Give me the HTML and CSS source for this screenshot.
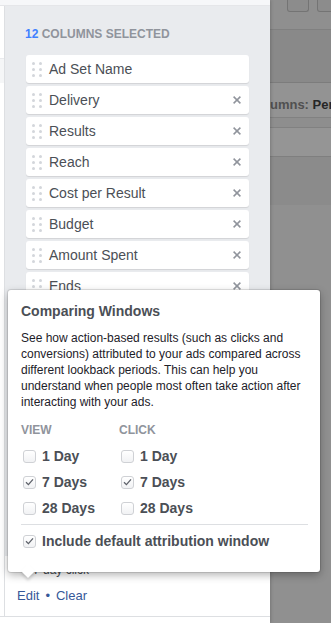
FILE: index.html
```html
<!DOCTYPE html>
<html lang="en">
  <head>
    <meta charset="UTF-8" />
    <meta name="viewport" content="width=device-width, initial-scale=1.0" />
    <title>Columns</title>
    <link rel="stylesheet" href="styles.css">
  </head>
  <body>
    <div class="page">
      <aside class="panel">
        <div class="panel-top"></div>
        <div class="panel-main">
          <div class="rail"><div class="rail-row"></div></div>
          <div class="panel-content">
            <div class="column-area">
              <h2 class="count"><span class="count-num">12</span> Columns Selected</h2>
              <ul class="column-list">
                <li class="column-item"><span class="handle"><i></i><i></i><i></i><i></i><i></i><i></i></span><span class="column-name">Ad Set Name</span></li>
                <li class="column-item"><span class="handle"><i></i><i></i><i></i><i></i><i></i><i></i></span><span class="column-name">Delivery</span><svg class="remove" width="8" height="8" viewBox="0 0 8 8"><path d="M0.6 0.6L7.4 7.4M7.4 0.6L0.6 7.4" /></svg></li>
                <li class="column-item"><span class="handle"><i></i><i></i><i></i><i></i><i></i><i></i></span><span class="column-name">Results</span><svg class="remove" width="8" height="8" viewBox="0 0 8 8"><path d="M0.6 0.6L7.4 7.4M7.4 0.6L0.6 7.4" /></svg></li>
                <li class="column-item"><span class="handle"><i></i><i></i><i></i><i></i><i></i><i></i></span><span class="column-name">Reach</span><svg class="remove" width="8" height="8" viewBox="0 0 8 8"><path d="M0.6 0.6L7.4 7.4M7.4 0.6L0.6 7.4" /></svg></li>
                <li class="column-item"><span class="handle"><i></i><i></i><i></i><i></i><i></i><i></i></span><span class="column-name">Cost per Result</span><svg class="remove" width="8" height="8" viewBox="0 0 8 8"><path d="M0.6 0.6L7.4 7.4M7.4 0.6L0.6 7.4" /></svg></li>
                <li class="column-item"><span class="handle"><i></i><i></i><i></i><i></i><i></i><i></i></span><span class="column-name">Budget</span><svg class="remove" width="8" height="8" viewBox="0 0 8 8"><path d="M0.6 0.6L7.4 7.4M7.4 0.6L0.6 7.4" /></svg></li>
                <li class="column-item"><span class="handle"><i></i><i></i><i></i><i></i><i></i><i></i></span><span class="column-name">Amount Spent</span><svg class="remove" width="8" height="8" viewBox="0 0 8 8"><path d="M0.6 0.6L7.4 7.4M7.4 0.6L0.6 7.4" /></svg></li>
                <li class="column-item"><span class="handle"><i></i><i></i><i></i><i></i><i></i><i></i></span><span class="column-name">Ends</span><svg class="remove" width="8" height="8" viewBox="0 0 8 8"><path d="M0.6 0.6L7.4 7.4M7.4 0.6L0.6 7.4" /></svg></li>
                <li class="column-item"><span class="handle"><i></i><i></i><i></i><i></i><i></i><i></i></span><span class="column-name">Schedule</span><svg class="remove" width="8" height="8" viewBox="0 0 8 8"><path d="M0.6 0.6L7.4 7.4M7.4 0.6L0.6 7.4" /></svg></li>
                <li class="column-item"><span class="handle"><i></i><i></i><i></i><i></i><i></i><i></i></span><span class="column-name">Relevance Score</span><svg class="remove" width="8" height="8" viewBox="0 0 8 8"><path d="M0.6 0.6L7.4 7.4M7.4 0.6L0.6 7.4" /></svg></li>
                <li class="column-item"><span class="handle"><i></i><i></i><i></i><i></i><i></i><i></i></span><span class="column-name">Impressions</span><svg class="remove" width="8" height="8" viewBox="0 0 8 8"><path d="M0.6 0.6L7.4 7.4M7.4 0.6L0.6 7.4" /></svg></li>
                <li class="column-item"><span class="handle"><i></i><i></i><i></i><i></i><i></i><i></i></span><span class="column-name">Frequency</span><svg class="remove" width="8" height="8" viewBox="0 0 8 8"><path d="M0.6 0.6L7.4 7.4M7.4 0.6L0.6 7.4" /></svg></li>
              </ul>
            </div>
            <div class="summary">
              <p class="summary-text">7 day click</p>
              <p class="summary-links"><a href="#">Edit</a><span class="dot">&bull;</span><a href="#">Clear</a></p>
            </div>
          </div>
        </div>
      </aside>

      <div class="backdrop">
        <div class="bd-toolbar">
          <span class="bd-btn"></span>
          <span class="bd-btn bd-btn-wide"></span>
        </div>
        <div class="bd-band"></div>
        <div class="bd-bar"></div>
        <div class="bd-filter">Columns: <strong>Performance</strong></div>
        <div class="bd-gap"></div>
        <div class="bd-head"></div>
        <div class="bd-row"></div>
        <div class="bd-rest"></div>
      </div>

      <div class="popover">
        <h3 class="popover-title">Comparing Windows</h3>
        <p class="popover-text">See how action-based results (such as clicks and conversions) attributed to your ads compared across different lookback periods. This can help you understand when people most often take action after interacting with your ads.</p>
        <div class="window-grid">
          <div class="window-col">
            <div class="window-label">View</div>
            <label class="check"><span class="box"></span>1 Day</label>
            <label class="check"><span class="box"><svg width="9" height="8" viewBox="0 0 9 8"><path d="M1 4.3L3.4 6.6L8 1.4" /></svg></span>7 Days</label>
            <label class="check"><span class="box"></span>28 Days</label>
          </div>
          <div class="window-col">
            <div class="window-label">Click</div>
            <label class="check"><span class="box"></span>1 Day</label>
            <label class="check"><span class="box"><svg width="9" height="8" viewBox="0 0 9 8"><path d="M1 4.3L3.4 6.6L8 1.4" /></svg></span>7 Days</label>
            <label class="check"><span class="box"></span>28 Days</label>
          </div>
        </div>
        <label class="check check-default"><span class="box"><svg width="9" height="8" viewBox="0 0 9 8"><path d="M1 4.3L3.4 6.6L8 1.4" /></svg></span>Include default attribution window</label>
      </div>
    </div>
  </body>
</html>
```

FILE: styles.css
```css
* {
  box-sizing: border-box;
}

body {
  margin: 0;
  font-family: 'Liberation Sans', Arial, Helvetica, sans-serif;
  background: #fff;
}

.page {
  position: relative;
  display: flex;
  height: 623px;
  overflow: hidden;
}

/* left panel */

.panel {
  position: relative;
  z-index: 1;
  width: 270px;
  flex: none;
  display: flex;
  flex-direction: column;
  background: #fff;
  box-shadow: 1px 0 3px rgba(0, 0, 0, 0.18);
}

.panel-top {
  height: 6px;
  background: #f6f7f9;
  border-bottom: 1px solid #e5e6e9;
}

.panel-main {
  height: 611px;
  display: flex;
  border-bottom: 1px solid #dddfe2;
}

.rail {
  width: 5px;
  flex: none;
  background: #fff;
  border-right: 1px solid #dddfe2;
}

.rail-row {
  margin-top: 52px;
  height: 25px;
  background: #f5f6f7;
  border-top: 1px solid #e9eaed;
}

.panel-content {
  flex: 1;
  min-width: 0;
  display: flex;
  flex-direction: column;
}

.column-area {
  flex: 1;
  background: #e9ebee;
  padding: 20px 21px 0 20px;
  overflow: hidden;
}

.count {
  margin: 0 0 13px;
  font-size: 12px;
  line-height: 16px;
  font-weight: bold;
  text-transform: uppercase;
  color: #90949c;
}

.count-num {
  color: #4080ff;
}

.column-list {
  list-style: none;
  margin: 0 0 0 1px;
  padding: 0;
  display: flex;
  flex-direction: column;
  gap: 3px;
}

.column-item {
  height: 28px;
  flex: none;
  display: flex;
  align-items: center;
  padding: 0 8px 0 6px;
  background: #fff;
  border-radius: 3px;
  box-shadow: 0 1px 1px rgba(0, 0, 0, 0.1);
  font-size: 14px;
  color: #4b4f56;
}

.handle {
  display: grid;
  grid-template-columns: repeat(2, 3px);
  grid-auto-rows: 3px;
  gap: 3px 4px;
  margin-right: 7px;
}

.handle i {
  border-radius: 50%;
  background: #d3d6db;
}

.column-name {
  flex: 1;
}

.remove path {
  stroke: #90949c;
  stroke-width: 1.5;
  fill: none;
}

.summary {
  height: 60px;
  padding: 6px 12px 12px;
  background: #fff;
}

.summary-text {
  margin: 0 0 10px;
  padding-left: 16px;
  font-size: 12px;
  line-height: 16px;
  color: #4b4f56;
}

.summary-links {
  margin: 0;
  font-size: 13px;
  line-height: 16px;
}

.summary-links a {
  color: #365899;
  text-decoration: none;
}

.dot {
  margin: 0 6px;
  color: #365899;
}

/* dimmed report behind */

.backdrop {
  flex: 1;
  display: flex;
  flex-direction: column;
  background: #8f8f8f;
}

.bd-toolbar {
  height: 12px;
  display: flex;
  gap: 8px;
  padding-left: 17px;
  background: #8f8f8f;
}

.bd-btn {
  width: 22px;
  height: 12px;
  border: 1px solid #747474;
  border-top: none;
  border-radius: 0 0 3px 3px;
  background: #8c8c8c;
}

.bd-btn-wide {
  width: 40px;
}

.bd-band {
  height: 18px;
  background: #8f8f8f;
  border-bottom: 1px solid #808080;
}

.bd-bar {
  height: 53px;
  background: #898989;
  border-bottom: 1px solid #7c7c7c;
}

.bd-filter {
  height: 35px;
  padding-top: 9px;
  font-size: 13px;
  line-height: 25px;
  font-weight: bold;
  white-space: nowrap;
  text-indent: -21px;
  color: #505050;
  background: #939393;
  border-bottom: 1px solid #818181;
}

.bd-filter strong {
  color: #262626;
}

.bd-gap {
  height: 10px;
  background: #8e8e8e;
  border-bottom: 1px solid #818181;
}

.bd-head {
  height: 29px;
  background: #959595;
  border-bottom: 1px solid #7f7f7f;
}

.bd-row {
  height: 48px;
  background: #8b8b8b;
}

.bd-rest {
  flex: 1;
  background: #909090;
}

/* attribution popover */

.popover {
  position: absolute;
  z-index: 2;
  left: 8px;
  top: 290px;
  width: 312px;
  padding: 12px 12px 18px 13px;
  background: #fff;
  border-radius: 3px;
  box-shadow: 0 0 0 1px rgba(0, 0, 0, 0.1), 0 3px 8px rgba(0, 0, 0, 0.3);
}

.popover::after {
  content: '';
  position: absolute;
  left: 15px;
  bottom: -4px;
  width: 10px;
  height: 10px;
  background: #fff;
  transform: rotate(45deg);
  box-shadow: 2px 2px 3px rgba(0, 0, 0, 0.15);
}

.popover-title {
  margin: 0 0 10px;
  font-size: 14px;
  line-height: 18px;
  font-weight: bold;
  color: #4b4f56;
}

.popover-text {
  margin: 0;
  font-size: 12px;
  line-height: 16px;
  color: #1d2129;
}

.window-grid {
  display: grid;
  grid-template-columns: 98px 98px;
  margin-top: 12px;
  padding-bottom: 3px;
  border-bottom: 1px solid #dddfe2;
}

.window-label {
  margin-bottom: 5px;
  font-size: 12px;
  line-height: 16px;
  font-weight: bold;
  text-transform: uppercase;
  color: #90949c;
}

.check {
  display: flex;
  align-items: center;
  height: 26px;
  font-size: 14px;
  font-weight: bold;
  color: #4b4f56;
  white-space: nowrap;
}

.check-default {
  margin-top: 3px;
}

.box {
  width: 13px;
  height: 13px;
  flex: none;
  display: flex;
  align-items: center;
  justify-content: center;
  margin: 0 6px 0 2px;
  border: 1px solid #cfd1d5;
  border-radius: 3px;
  background: linear-gradient(#fff, #f1f2f4);
}

.box path {
  stroke: #5d6169;
  stroke-width: 1.3;
  fill: none;
}
```
